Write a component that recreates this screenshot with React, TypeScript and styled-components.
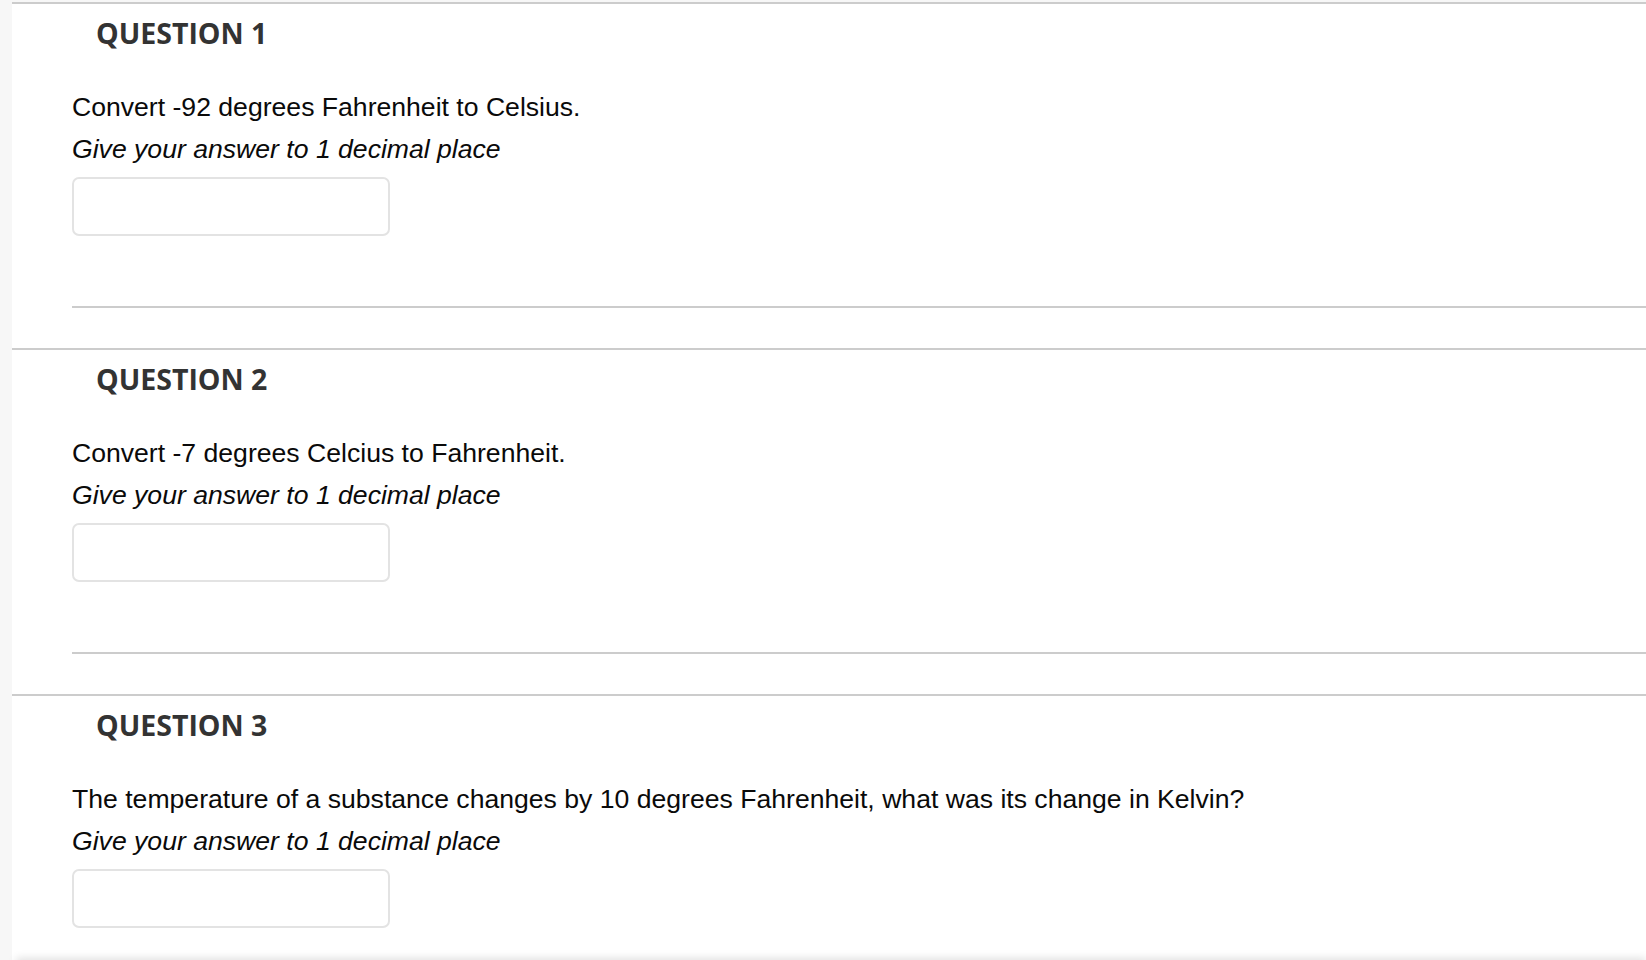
import React, { FC } from 'react';
import styled, { createGlobalStyle } from 'styled-components';

const GlobalStyle = createGlobalStyle`
  html, body {
    margin: 0;
    padding: 0;
    background: #f7f7f7;
    height: 960px;
    overflow: hidden;
  }
`;

const Page = styled.div`
  padding-top: 2px;
  padding-left: 12px;
  min-height: 960px;
  box-sizing: border-box;
`;

const Card = styled.main`
  background: #ffffff;
  min-height: 958px;
`;

const Section = styled.section`
  border-top: 2px solid #cccccc;
`;

const Heading = styled.h2`
  margin: 0;
  padding: 10px 0 0 84px;
  font-family: "Open Sans", sans-serif;
  font-weight: 700;
  font-size: 28.5px;
  line-height: 38px;
  color: #333333;
`;

const Body = styled.div`
  padding: 34px 0 0 60px;
`;

const Prompt = styled.p<{ $italic?: boolean }>`
  margin: 0;
  font-family: "Liberation Sans", Arial, sans-serif;
  font-size: 26.6px;
  line-height: 42px;
  color: #0a0a0a;
  font-style: ${(p) => (p.$italic ? 'italic' : 'normal')};
`;

const AnswerInput = styled.input`
  display: block;
  box-sizing: border-box;
  width: 318px;
  height: 59px;
  margin-top: 7px;
  border: 2px solid #e3e3e3;
  border-radius: 7px;
  background: #ffffff;
  outline: none;
  padding: 0 12px;
  font-size: 22px;
`;

const Divider = styled.hr`
  margin: 70px 0 40px 0;
  border: none;
  border-top: 2px solid #cccccc;
  height: 0;
`;

// bar below the fold, only its shadow shows at the bottom edge
const FooterShadow = styled.div`
  position: fixed;
  left: 16px;
  right: 0;
  bottom: -40px;
  height: 40px;
  background: #ffffff;
  box-shadow: 0 -2px 8px rgba(0, 0, 0, 0.12);
`;

type Question = {
  number: number;
  text: string;
};

const questions: Question[] = [
  { number: 1, text: 'Convert -92 degrees Fahrenheit to Celsius.' },
  { number: 2, text: 'Convert -7 degrees Celcius to Fahrenheit.' },
  {
    number: 3,
    text: 'The temperature of a substance changes by 10 degrees Fahrenheit, what was its change in Kelvin?',
  },
];

const QuestionBlock: FC<{ question: Question }> = ({ question }) => (
  <Section>
    <Heading>QUESTION {question.number}</Heading>
    <Body>
      <Prompt>{question.text}</Prompt>
      <Prompt $italic>Give your answer to 1 decimal place</Prompt>
      <AnswerInput type="text" aria-label={`Answer ${question.number}`} />
      <Divider />
    </Body>
  </Section>
);

const App: FC = () => (
  <>
    <GlobalStyle />
    <Page>
      <Card>
        {questions.map((q) => (
          <QuestionBlock key={q.number} question={q} />
        ))}
      </Card>
    </Page>
    <FooterShadow />
  </>
);

export default App;
